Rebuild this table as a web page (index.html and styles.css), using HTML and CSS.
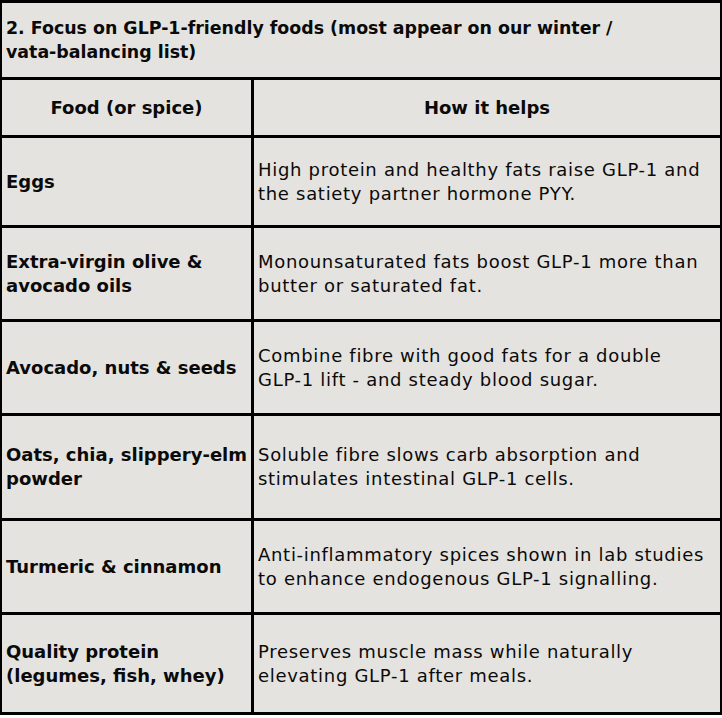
FILE: index.html
```html
<!DOCTYPE html>
<html>
<head>
<meta charset="utf-8">
<link rel="stylesheet" href="styles.css">
</head>
<body>
<div class="table">
  <div class="cell title">2. Focus on GLP-1-friendly foods (most appear on our winter /<br>vata-balancing list)</div>
  <div class="cell head">Food (or spice)</div>
  <div class="cell head">How it helps</div>
  <div class="cell food">Eggs</div>
  <div class="cell desc">High protein and healthy fats raise GLP-1 and<br>the satiety partner hormone PYY.</div>
  <div class="cell food">Extra-virgin olive &amp;<br>avocado oils</div>
  <div class="cell desc">Monounsaturated fats boost GLP-1 more than<br>butter or saturated fat.</div>
  <div class="cell food">Avocado, nuts &amp; seeds</div>
  <div class="cell desc">Combine fibre with good fats for a double<br>GLP-1 lift - and steady blood sugar.</div>
  <div class="cell food">Oats, chia, slippery-elm<br>powder</div>
  <div class="cell desc">Soluble fibre slows carb absorption and<br>stimulates intestinal GLP-1 cells.</div>
  <div class="cell food">Turmeric &amp; cinnamon</div>
  <div class="cell desc">Anti-inflammatory spices shown in lab studies<br>to enhance endogenous GLP-1 signalling.</div>
  <div class="cell food">Quality protein<br>(legumes, fish, whey)</div>
  <div class="cell desc">Preserves muscle mass while naturally<br>elevating GLP-1 after meals.</div>
</div>
</body>
</html>
```
FILE: styles.css
```css
html, body {
  margin: 0;
  padding: 0;
  background: #ffffff;
}
body {
  font-family: "DejaVu Sans", "Noto Sans", sans-serif;
  color: #0a0a0a;
}
.table {
  width: 722px;
  box-sizing: border-box;
  display: grid;
  grid-template-columns: 249px 466px;
  grid-template-rows: 74px 55px 87px 91px 91px 102px 91px 97px;
  column-gap: 3px;
  row-gap: 3px;
  background: #000;
  border-top: 3px solid #000;
  border-bottom: 3px solid #000;
  border-left: 2px solid #000;
  border-right: 2px solid #000;
}
.cell {
  background: #e5e3df;
  display: flex;
  align-items: center;
  font-size: 18px;
  line-height: 24px;
  white-space: nowrap;
}
.title {
  grid-column: 1 / 3;
  font-weight: 700;
  font-size: 17.4px;
  padding: 0 4px;
}
.head {
  justify-content: center;
  font-weight: 700;
}
.food {
  font-weight: 700;
  padding: 0 4px;
}
.desc {
  padding: 0 4px;
  letter-spacing: 0.7px;
}
```
